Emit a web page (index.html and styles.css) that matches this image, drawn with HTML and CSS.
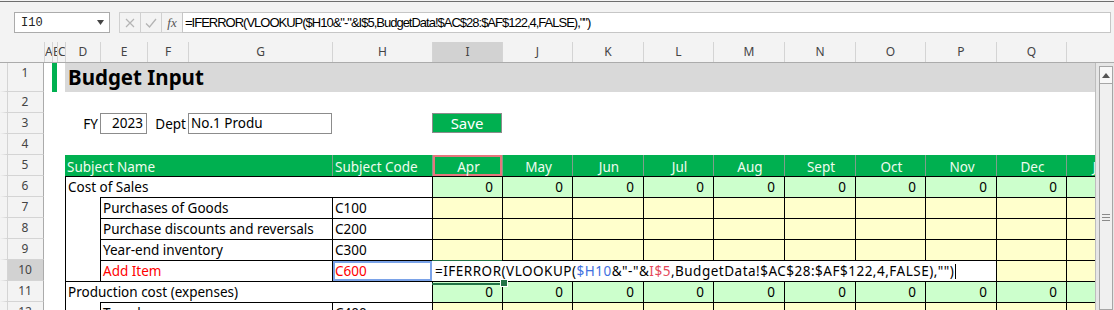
FILE: index.html
```html
<!DOCTYPE html>
<html lang="en">
<head>
    <meta charset="UTF-8">
    <title>Budget Input</title>
    <link rel="stylesheet" href="styles.css">
</head>
<body>
<div class="window">
    <div class="window-edge"></div>

    <div class="formula-bar">
        <div class="name-box">
            <span>I10</span>
            <svg width="7" height="5" viewBox="0 0 7 5"><polygon points="0,0 7,0 3.5,5" fill="#444"/></svg>
        </div>
        <div class="fx-group">
            <span class="fx-btn">
                <svg width="10" height="10" viewBox="0 0 10 10"><path d="M1 1 L9 9 M9 1 L1 9" stroke="#b4b4b4" stroke-width="1.2" fill="none"/></svg>
            </span>
            <span class="fx-btn">
                <svg width="12" height="10" viewBox="0 0 12 10"><path d="M1 5.5 L4.5 9 L11 1" stroke="#b4b4b4" stroke-width="1.3" fill="none"/></svg>
            </span>
            <span class="fx-btn fx-label">fx</span>
        </div>
        <div class="formula-input">=IFERROR(VLOOKUP($H10&amp;"-"&amp;I$5,BudgetData!$AC$28:$AF$122,4,FALSE),"")</div>
    </div>

    <div class="col-head">
        <div class="corner"></div>
        <div>A</div><div>B</div><div>C</div><div>D</div><div>E</div><div>F</div>
        <div>G</div><div>H</div><div class="sel">I</div><div>J</div><div>K</div>
        <div>L</div><div>M</div><div>N</div><div>O</div><div>P</div><div>Q</div><div></div>
    </div>

    <div class="sheet-body">
        <div class="grid-wrap">
            <div class="cells">
                <!-- 1 -->
                <div class="rh">1</div>
                <div class="col-b mark"></div>
                <div class="title">Budget Input</div>

                <!-- 2 -->
                <div class="rh">2</div>

                <!-- 3 -->
                <div class="rh">3</div>
                <div class="col-d label">FY</div>
                <div class="col-e box num-box">2023</div>
                <div class="col-f label">Dept</div>
                <div class="col-g box">No.1 Produ</div>
                <div class="col-i"><div class="save">Save</div></div>

                <!-- 4 -->
                <div class="rh">4</div>

                <!-- 5 -->
                <div class="rh">5</div>
                <div class="d-g hd">Subject Name</div>
                <div class="col-h hd sep">Subject Code</div>
                <div class="hd sep ctr ref-red">Apr</div>
                <div class="hd sep ctr">May</div>
                <div class="hd sep ctr">Jun</div>
                <div class="hd sep ctr">Jul</div>
                <div class="hd sep ctr">Aug</div>
                <div class="hd sep ctr">Sept</div>
                <div class="hd sep ctr">Oct</div>
                <div class="hd sep ctr">Nov</div>
                <div class="hd sep ctr">Dec</div>
                <div class="hd sep ctr">Jan</div>

                <!-- 6 -->
                <div class="rh">6</div>
                <div class="d-h c bt bl">Cost of Sales</div>
                <div class="c m sum">0</div><div class="c m sum">0</div><div class="c m sum">0</div>
                <div class="c m sum">0</div><div class="c m sum">0</div><div class="c m sum">0</div>
                <div class="c m sum">0</div><div class="c m sum">0</div><div class="c m sum">0</div>
                <div class="c m sum">0</div>

                <!-- 7 -->
                <div class="rh">7</div>
                <div class="col-d bl"></div>
                <div class="e-g c bt bl">Purchases of Goods</div>
                <div class="col-h c bt bl">C100</div>
                <div class="c m inp"></div><div class="c m inp"></div><div class="c m inp"></div>
                <div class="c m inp"></div><div class="c m inp"></div><div class="c m inp"></div>
                <div class="c m inp"></div><div class="c m inp"></div><div class="c m inp"></div>
                <div class="c m inp"></div>

                <!-- 8 -->
                <div class="rh">8</div>
                <div class="col-d bl"></div>
                <div class="e-g c bt bl">Purchase discounts and reversals</div>
                <div class="col-h c bt bl">C200</div>
                <div class="c m inp"></div><div class="c m inp"></div><div class="c m inp"></div>
                <div class="c m inp"></div><div class="c m inp"></div><div class="c m inp"></div>
                <div class="c m inp"></div><div class="c m inp"></div><div class="c m inp"></div>
                <div class="c m inp"></div>

                <!-- 9 -->
                <div class="rh">9</div>
                <div class="col-d bl"></div>
                <div class="e-g c bt bl">Year-end inventory</div>
                <div class="col-h c bt bl">C300</div>
                <div class="c m inp"></div><div class="c m inp"></div><div class="c m inp"></div>
                <div class="c m inp"></div><div class="c m inp"></div><div class="c m inp"></div>
                <div class="c m inp"></div><div class="c m inp"></div><div class="c m inp"></div>
                <div class="c m inp"></div>

                <!-- 10: editing I10 -->
                <div class="rh sel">10</div>
                <div class="col-d bl"></div>
                <div class="e-g c bt bl red">Add Item</div>
                <div class="col-h c bt bl red ref-blue">C600</div>
                <div class="i-p c edit">=IFERROR(VLOOKUP(<span class="ref1">$H10</span>&amp;"-"&amp;<span class="ref2">I$5</span>,BudgetData!$AC$28:$AF$122,4,FALSE),"")<span class="caret"></span></div>
                <div class="c m inp"></div>
                <div class="c m inp"></div>

                <!-- 11 -->
                <div class="rh">11</div>
                <div class="d-h c bt bl">Production cost (expenses)</div>
                <div class="c m sum">0</div><div class="c m sum">0</div><div class="c m sum">0</div>
                <div class="c m sum">0</div><div class="c m sum">0</div><div class="c m sum">0</div>
                <div class="c m sum">0</div><div class="c m sum">0</div><div class="c m sum">0</div>
                <div class="c m sum">0</div>

                <!-- 12 -->
                <div class="rh">12</div>
                <div class="col-d bl"></div>
                <div class="e-g c bt bl">Travel expenses</div>
                <div class="col-h c bt bl">C400</div>
                <div class="c m inp"></div><div class="c m inp"></div><div class="c m inp"></div>
                <div class="c m inp"></div><div class="c m inp"></div><div class="c m inp"></div>
                <div class="c m inp"></div><div class="c m inp"></div><div class="c m inp"></div>
                <div class="c m inp"></div>
            </div>
        </div>

        <div class="vscroll">
            <div class="vs-up">
                <svg width="8" height="5" viewBox="0 0 8 5"><polygon points="0,5 8,5 4,0" fill="#555"/></svg>
            </div>
            <div class="vs-thumb">
                <svg width="8" height="7" viewBox="0 0 8 7"><path d="M0 0.5 H8 M0 3.5 H8 M0 6.5 H8" stroke="#8a8a8a" stroke-width="1"/></svg>
            </div>
        </div>
    </div>
</div>
</body>
</html>
```

FILE: styles.css
```css
* {
    box-sizing: border-box;
}
body {
    margin: 0;
    background: #f3f3f3;
    font-family: "Noto Sans", sans-serif;
    font-size: 13.5px;
    color: #000;
}
.window {
    width: 1114px;
    height: 310px;
    overflow: hidden;
    padding-top: 1px;
}
.window-edge {
    height: 1px;
    background: #6e6e6e;
}

/* formula bar */
.formula-bar {
    display: flex;
    height: 21px;
    margin: 10px 3px 9px 14px;
}
.name-box {
    width: 96px;
    display: flex;
    align-items: center;
    justify-content: space-between;
    padding: 0 5px 0 6px;
    background: #fff;
    border: 1px solid #ababab;
    font-family: "Liberation Mono", monospace;
    font-size: 12px;
    color: #222;
}
.fx-group {
    display: flex;
    width: 63px;
    margin-left: 9px;
    border: 1px solid #d0d0d0;
    border-right: none;
}
.fx-btn {
    flex: 1;
    display: flex;
    align-items: center;
    justify-content: center;
    border-right: 1px solid #d0d0d0;
}
.fx-btn:last-child {
    border-right: none;
}
.fx-label {
    font-family: "Liberation Serif", serif;
    font-style: italic;
    font-size: 13px;
    color: #555;
}
.formula-input {
    flex: 1;
    background: #fff;
    border: 1px solid #c6c6c6;
    padding-left: 2px;
    font-family: "Liberation Sans", sans-serif;
    font-size: 13px;
    letter-spacing: -1px;
    line-height: 19px;
    white-space: nowrap;
    overflow: hidden;
}

/* column headers */
.col-head,
.cells {
    display: grid;
    grid-template-columns: 44px 8px 5px 8px 35px 47px 41px 144px 100px 70px 70px 71px 70px 71px 71px 70px 71px 70px 70px;
}
.col-head {
    height: 21px;
    border-bottom: 1px solid #ababab;
    color: #444;
    font-size: 12px;
    overflow: hidden;
}
.col-head div {
    border-left: 1px solid #d4d4d4;
    text-align: center;
    line-height: 20px;
    overflow: hidden;
}
.col-head .corner {
    border-left: none;
}
.col-head .sel {
    background: #d2d2d2;
}

/* sheet */
.sheet-body {
    display: flex;
    height: 247px;
}
.grid-wrap {
    width: 1095px;
    overflow: hidden;
    background: #fff;
}
.cells {
    grid-template-rows: 29px;
    grid-auto-rows: 21px;
}
.rh {
    grid-column: 1;
    border-left: 7px solid #f3f3f3;
    border-right: 1px solid #ababab;
    border-bottom: 1px solid #d4d4d4;
    background: #f3f3f3;
    box-shadow: inset 1px 0 #d4d4d4;
    color: #444;
    font-size: 12px;
    text-align: center;
    line-height: 20px;
}
.rh.sel {
    background: #d2d2d2;
}
.col-b { grid-column: 3; }
.col-d { grid-column: 5; }
.col-e { grid-column: 6; }
.col-f { grid-column: 7; }
.col-g { grid-column: 8; }
.col-h { grid-column: 9; }
.col-i { grid-column: 10; }
.d-g { grid-column: 5 / 9; }
.d-h { grid-column: 5 / 10; }
.e-g { grid-column: 6 / 9; }
.i-p { grid-column: 10 / 18; }

.mark {
    background: #00b050;
}
.title {
    grid-column: 5 / -1;
    background: #d9d9d9;
    font-weight: bold;
    font-size: 20.5px;
    line-height: 29px;
    padding-left: 3px;
    white-space: nowrap;
}

/* row 3 inputs */
.label {
    text-align: right;
    padding-right: 2px;
    line-height: 16px;
    padding-top: 3px;
}
.box {
    border: 1px solid #8c8c8c;
    background: #fff;
    line-height: 19px;
    padding-left: 2px;
    white-space: nowrap;
    overflow: hidden;
}
.num-box {
    text-align: right;
    padding-right: 3px;
}
.save {
    height: 20px;
    background: #00b050;
    border: 1px solid #8c8c8c;
    color: #fff;
    font-size: 15px;
    line-height: 18px;
    text-align: center;
}

/* table */
.hd {
    background: #00b050;
    color: #effcef;
    line-height: 18px;
    padding: 3px 0 0 2px;
    white-space: nowrap;
    overflow: hidden;
}
.sep {
    border-left: 1px solid #7f9f8b;
}
.ctr {
    text-align: center;
}
.ref-red {
    box-shadow: inset 0 0 0 2px #e5767c;
}
.c {
    padding: 0 2px;
    line-height: 20px;
    white-space: nowrap;
    overflow: hidden;
}
.bt {
    border-top: 1px solid #000;
}
.bl {
    border-left: 1px solid #000;
}
.m {
    border-top: 1px solid #000;
    border-left: 1px solid #000;
    text-align: right;
    padding-right: 9px;
}
.sum {
    background: #ccffcc;
}
.inp {
    background: #ffffcc;
}
.red {
    color: #ff0000;
}
.ref-blue {
    box-shadow: inset 0 0 0 2px #7aa2e8;
}
.edit {
    position: relative;
    z-index: 2;
    background: #fff;
    border-top: 1px solid #000;
    padding-left: 3px;
    letter-spacing: 0.5px;
    overflow: visible;
}
.edit::before {
    content: "";
    position: absolute;
    left: 0;
    top: -1px;
    width: 70px;
    height: 22px;
    border-top: 1px solid #217346;
    border-bottom: 2px solid #217346;
}
.edit::after {
    content: "";
    position: absolute;
    left: 68px;
    top: 18px;
    width: 6px;
    height: 6px;
    background: #217346;
    border: 1px solid #fff;
}
.ref1 {
    color: #4070e0;
}
.ref2 {
    color: #e4485a;
}
.caret {
    display: inline-block;
    width: 1px;
    height: 15px;
    margin-left: 1px;
    background: #000;
    vertical-align: -3px;
}

/* scrollbar */
.vscroll {
    width: 19px;
    display: flex;
    flex-direction: column;
    padding: 3px 1px 0 3px;
    background: #e6e6e6;
    border-left: 1px solid #bdbdbd;
}
.vs-up {
    height: 18px;
    display: flex;
    align-items: center;
    justify-content: center;
    background: #f8f8f8;
    border: 1px solid #a6a6a6;
}
.vs-thumb {
    flex: 1;
    display: flex;
    justify-content: center;
    align-items: flex-start;
    padding-top: 130px;
    background: #f0f0f0;
    border: 1px solid #a6a6a6;
    border-top: none;
}
```
